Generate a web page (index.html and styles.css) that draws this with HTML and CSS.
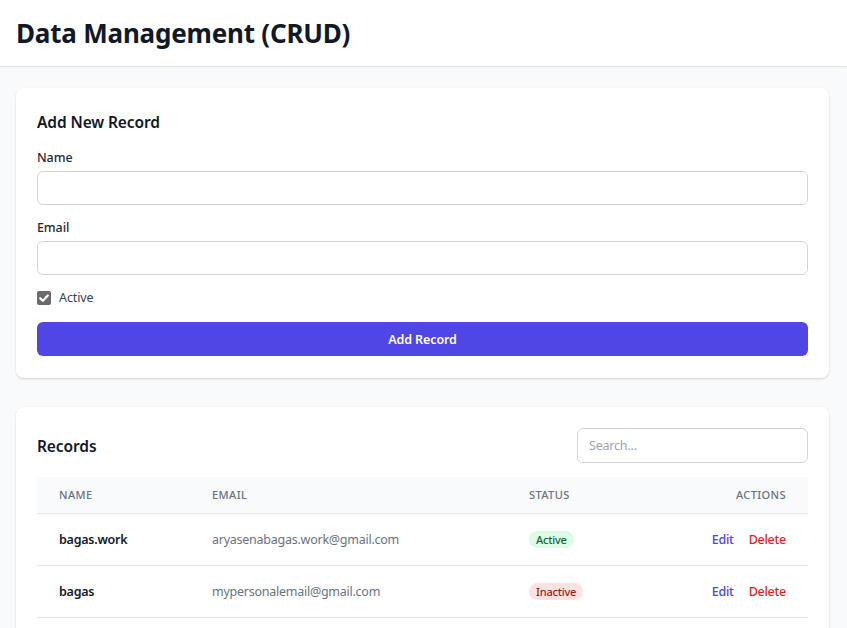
FILE: index.html
```html
<!DOCTYPE html>
<html>
<head>
<meta charset="utf-8">
<link rel="stylesheet" href="styles.css">
</head>
<body>
<header class="topbar">
  <h1 class="page-title">Data Management (CRUD)</h1>
</header>
<main class="content">
  <section class="card form-card">
    <h2 class="card-title">Add New Record</h2>
    <div class="field">
      <label class="field-label">Name</label>
      <input class="text-input" type="text">
    </div>
    <div class="field">
      <label class="field-label">Email</label>
      <input class="text-input" type="text">
    </div>
    <label class="check-row">
      <span class="checkbox">
        <svg viewBox="0 0 14 14" width="14" height="14"><path d="M3.2 7.2 L5.8 9.8 L10.8 4.4" fill="none" stroke="#fff" stroke-width="2.2" stroke-linecap="round" stroke-linejoin="round"/></svg>
      </span>
      <span class="check-label">Active</span>
    </label>
    <button class="primary-btn">Add Record</button>
  </section>

  <section class="card table-card">
    <div class="table-head-row">
      <h2 class="card-title">Records</h2>
      <input class="search-input" type="text" placeholder="Search...">
    </div>
    <table class="records">
      <colgroup>
        <col class="c-name"><col class="c-email"><col class="c-status"><col class="c-actions">
      </colgroup>
      <thead>
        <tr>
          <th>Name</th>
          <th>Email</th>
          <th>Status</th>
          <th class="right">Actions</th>
        </tr>
      </thead>
      <tbody>
        <tr>
          <td class="name">bagas.work</td>
          <td class="email">aryasenabagas.work@gmail.com</td>
          <td><span class="badge active">Active</span></td>
          <td class="right"><a class="act edit">Edit</a><a class="act del">Delete</a></td>
        </tr>
        <tr>
          <td class="name">bagas</td>
          <td class="email">mypersonalemail@gmail.com</td>
          <td><span class="badge inactive">Inactive</span></td>
          <td class="right"><a class="act edit">Edit</a><a class="act del">Delete</a></td>
        </tr>
      </tbody>
    </table>
  </section>
</main>
</body>
</html>
```

FILE: styles.css
```css
* { box-sizing: border-box; }
html, body { margin: 0; padding: 0; }
body {
  font-family: "Noto Sans", "Open Sans", sans-serif;
  background: #f9fafb;
  color: #111827;
}
.topbar {
  background: #fff;
  height: 67px;
  border-bottom: 1px solid #e5e7eb;
  box-shadow: 0 1px 2px rgba(0,0,0,0.05);
  display: flex;
  align-items: center;
  padding: 0 16px;
}
.page-title {
  margin: 0;
  font-size: 26px;
  font-weight: 700;
  color: #111827;
  letter-spacing: -0.2px;
}
.content {
  padding: 21px 18px 0 16px;
  display: flex;
  flex-direction: column;
  gap: 29px;
}
.card {
  background: #fff;
  border-radius: 8px;
  box-shadow: 0 1px 3px rgba(0,0,0,0.1), 0 1px 2px rgba(0,0,0,0.06);
  padding: 23px 21px 22px;
}
.table-card { padding-top: 21px; }
.card-title {
  margin: 0;
  font-size: 15.5px;
  font-weight: 600;
  color: #111827;
  letter-spacing: -0.1px;
}
.form-card .card-title { margin-bottom: 16px; }
.field { display: flex; flex-direction: column; margin-bottom: 14px; }
.field-label {
  font-size: 12.5px;
  font-weight: 500;
  color: #1f2937;
  margin-bottom: 4px;
  line-height: 18px;
  letter-spacing: -0.1px;
}
.text-input {
  height: 34px;
  border: 1px solid #d1d5db;
  border-radius: 6px;
  font: inherit;
  padding: 0 10px;
}
.check-row {
  display: flex;
  align-items: center;
  gap: 8px;
  margin-top: 7px;
  margin-bottom: 16px;
}
.checkbox {
  width: 14px;
  height: 14px;
  border-radius: 2px;
  background: #6b6b6b;
  display: inline-flex;
}
.check-label { font-size: 12.5px; color: #374151; letter-spacing: -0.1px; }
.primary-btn {
  display: block;
  width: 100%;
  height: 34px;
  border: none;
  border-radius: 6px;
  background: #4f46e5;
  color: #fff;
  font-family: inherit;
  font-size: 12.5px;
  font-weight: 600;
  letter-spacing: -0.1px;
}
.table-head-row {
  display: flex;
  align-items: center;
  justify-content: space-between;
  margin-bottom: 14px;
}
.search-input {
  width: 231px;
  height: 35px;
  border: 1px solid #d1d5db;
  border-radius: 6px;
  padding: 0 11px;
  font-family: inherit;
  font-size: 12.5px;
  letter-spacing: -0.2px;
}
.search-input::placeholder { color: #9ca3af; }
.records {
  width: 100%;
  border-collapse: collapse;
  table-layout: fixed;
}
.c-name { width: 153px; }
.c-email { width: 317px; }
.c-status { width: 160px; }
.records th {
  background: #f9fafb;
  height: 36px;
  text-align: left;
  padding: 0 22px;
  font-size: 11px;
  font-weight: 500;
  letter-spacing: 0.4px;
  text-transform: uppercase;
  color: #6b7280;
  border-bottom: 1px solid #e5e7eb;
}
.records td {
  height: 52px;
  padding: 0 22px;
  font-size: 12.5px;
  letter-spacing: -0.25px;
  border-bottom: 1px solid #e5e7eb;
}
.records .right { text-align: right; }
.records td.name { font-weight: 600; color: #111827; }
.records td.email { color: #6b7280; }
.badge {
  display: inline-block;
  font-size: 11px;
  font-weight: 500;
  padding: 1px 7px;
  border-radius: 9999px;
  line-height: 15px;
  letter-spacing: -0.2px;
}
.badge.active { background: #dcfce7; color: #166534; }
.badge.inactive { background: #fee2e2; color: #991b1b; }
.act { font-size: 12.5px; font-weight: 500; cursor: pointer; }
.act.edit { color: #4f46e5; margin-right: 15px; }
.act.del { color: #dc2626; }
```
